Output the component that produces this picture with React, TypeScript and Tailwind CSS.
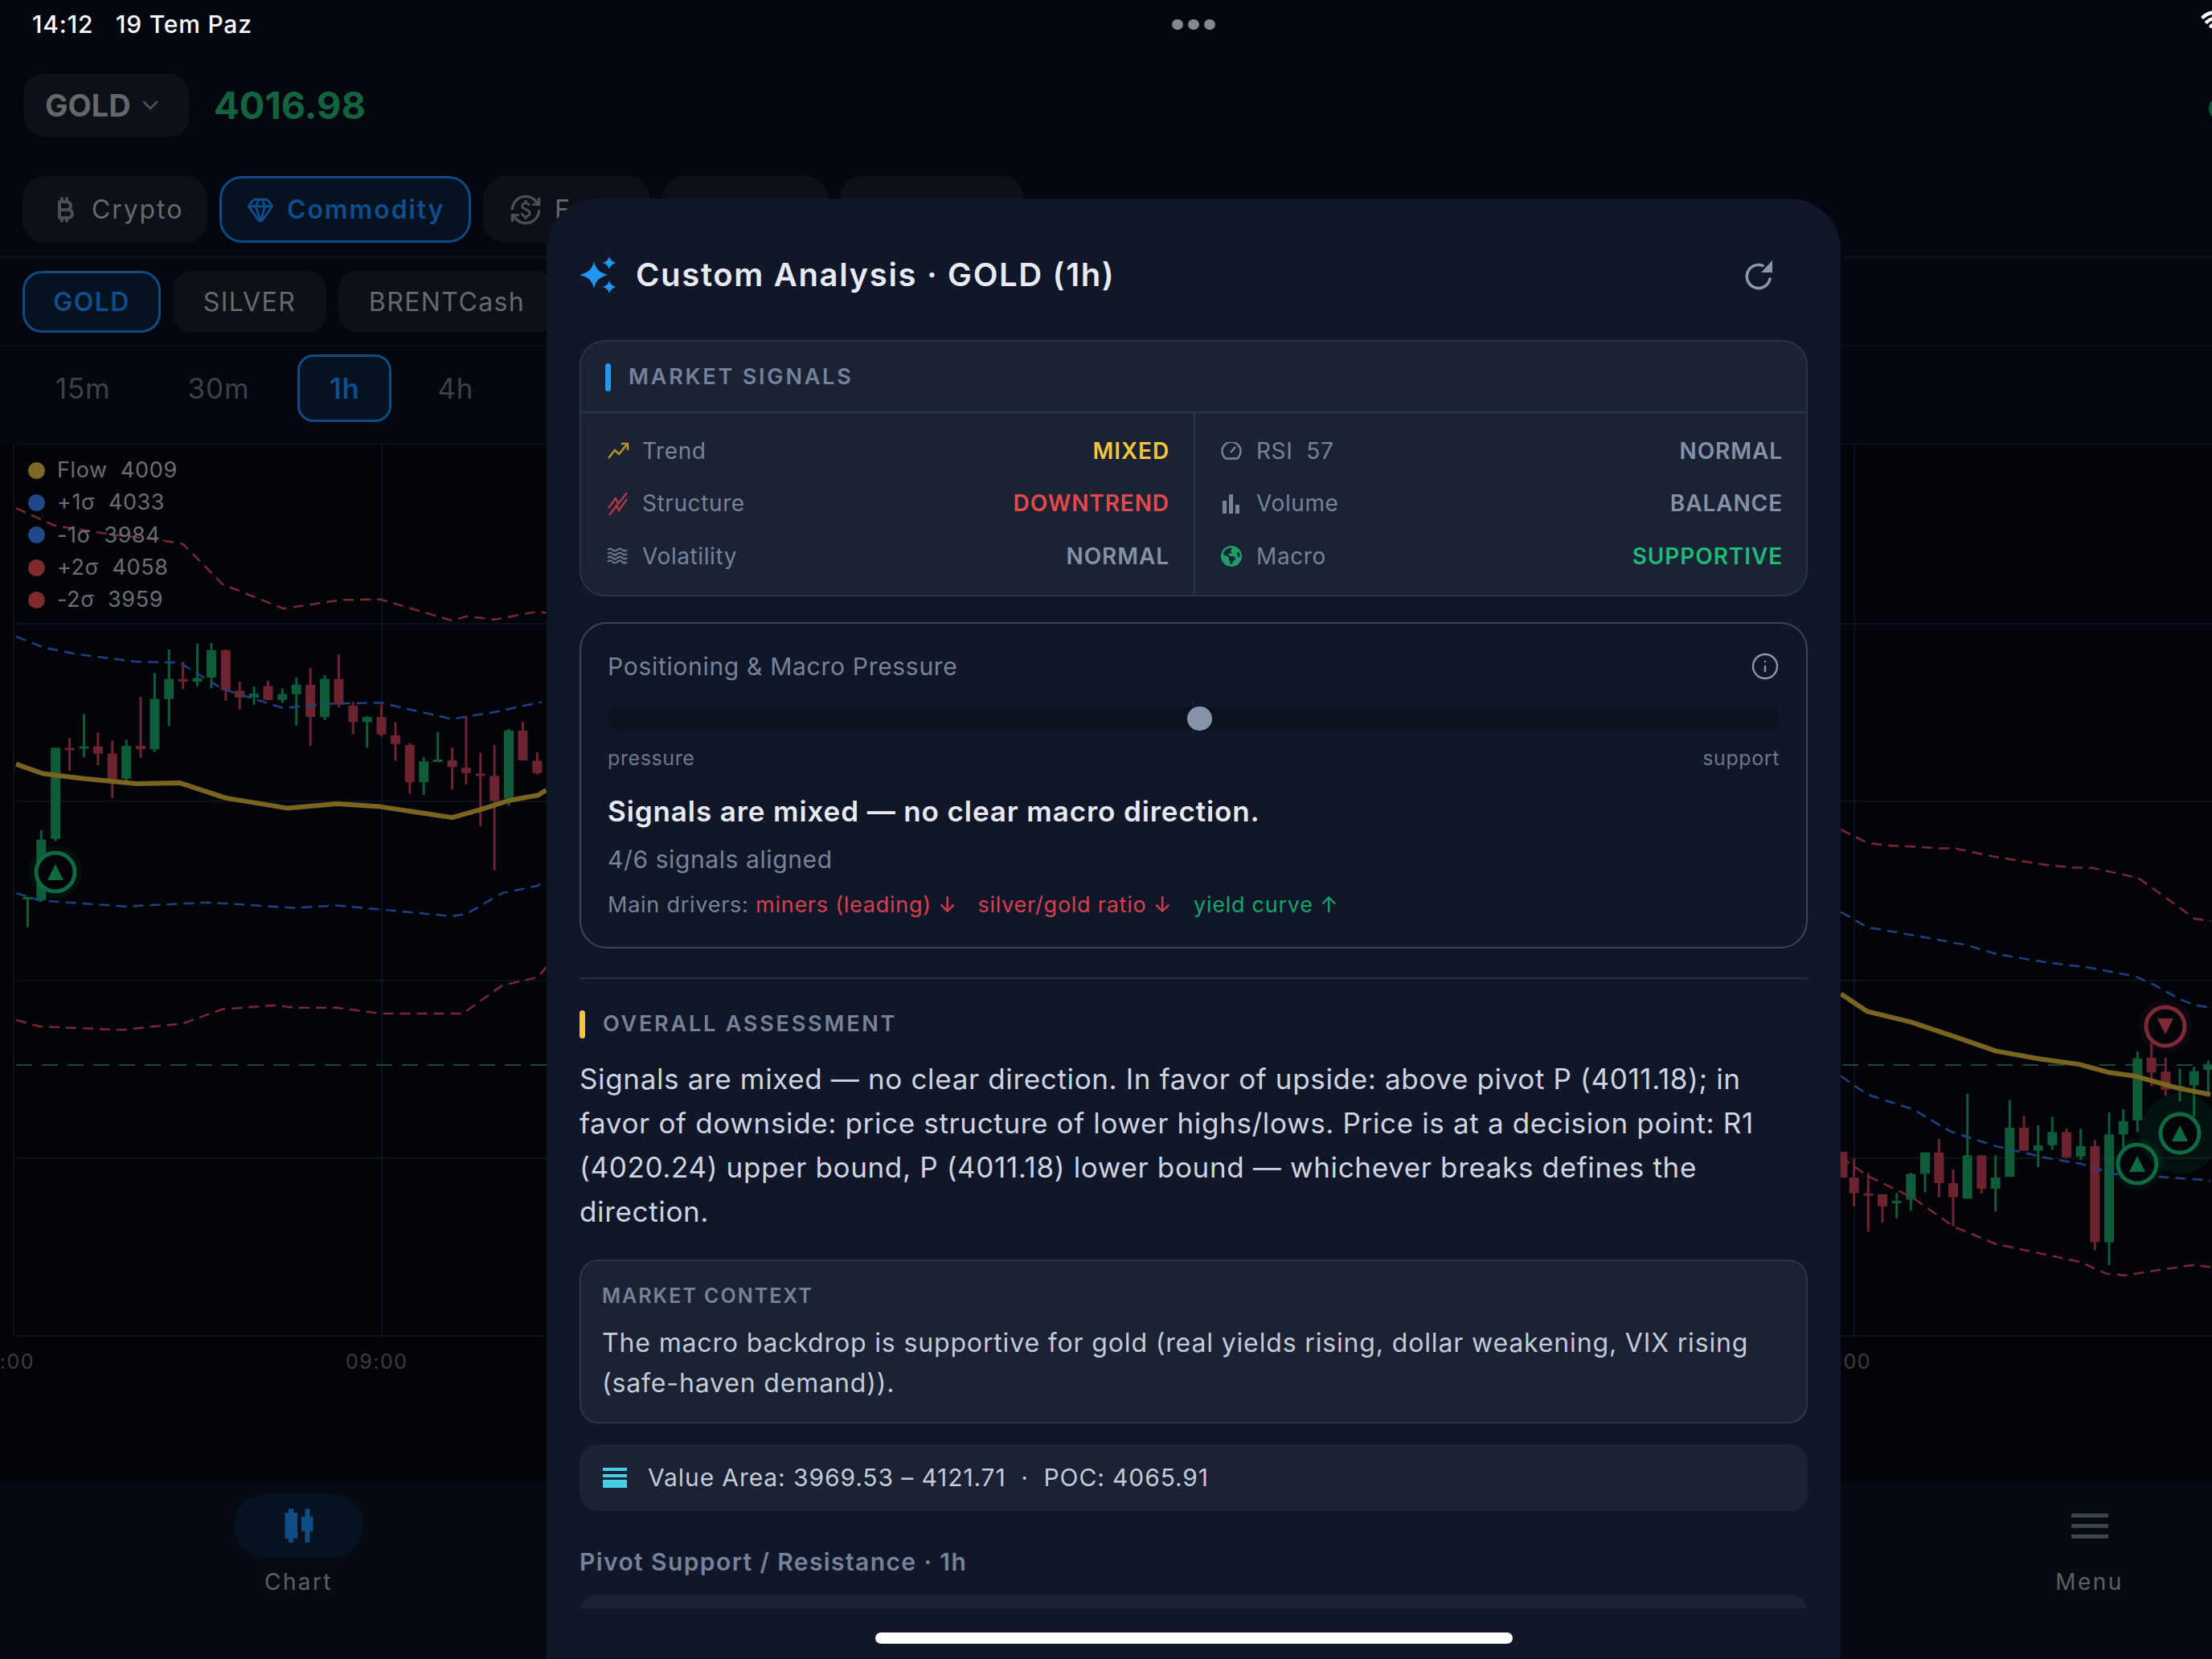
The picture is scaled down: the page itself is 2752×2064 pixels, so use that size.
import React from 'react';
import { ChevronDown, Gem, Info, Wifi } from 'lucide-react';
import { FaBitcoinSign, FaEarthAmericas } from 'react-icons/fa6';
import { MdCurrencyExchange } from 'react-icons/md';

type Pt = [number, number];
type Candle = [number, number, number, number, number, 'g' | 'r'];

// chart data is read off two crops of the reference, converted to page coords below
const leftX = (x: number) => x / 2.24;
const leftY = (y: number) => 550 + y / 2.8;
const lowY = (y: number) => 1100 + y / 1.627;
const rightX = (x: number) => 2280 + x / 3;
const rightY = (y: number) => 960 + y / 2.178;

const leftCandles: Candle[] = [
  [77, 1585, 1690, 1585, 1590, 'g'], [115, 1352, 1600, 1385, 1596, 'g'], [155, 1065, 1390, 1065, 1382, 'g'],
  [194, 1030, 1145, 1065, 1073, 'r'], [234, 948, 1098, 1060, 1068, 'g'], [273, 1012, 1125, 1060, 1085, 'r'],
  [313, 1040, 1240, 1085, 1175, 'r'], [352, 1037, 1180, 1058, 1172, 'g'], [392, 888, 1100, 1058, 1070, 'r'],
  [431, 805, 1080, 895, 1070, 'g'], [471, 722, 990, 825, 895, 'g'], [510, 765, 860, 825, 835, 'r'],
  [550, 702, 850, 822, 835, 'g'], [589, 700, 858, 725, 820, 'g'], [629, 722, 902, 725, 865, 'r'],
  [668, 835, 932, 866, 890, 'r'], [708, 852, 915, 876, 890, 'g'], [747, 832, 900, 850, 898, 'r'],
  [787, 858, 908, 878, 898, 'g'], [826, 820, 988, 845, 878, 'g'], [865, 787, 1058, 845, 958, 'r'],
  [905, 812, 968, 825, 958, 'g'], [944, 740, 925, 825, 915, 'r'], [984, 905, 1017, 918, 975, 'r'],
  [1023, 955, 1065, 958, 975, 'g'], [1063, 915, 1025, 958, 1018, 'r'], [1102, 975, 1110, 1022, 1052, 'r'],
  [1142, 1048, 1225, 1055, 1185, 'r'], [1181, 1098, 1230, 1112, 1185, 'g'], [1220, 1010, 1112, 1106, 1112, 'g'],
  [1260, 1065, 1210, 1108, 1132, 'r'], [1299, 955, 1192, 1135, 1153, 'r'], [1339, 1082, 1338, 1155, 1162, 'r'],
  [1378, 1055, 1492, 1163, 1250, 'r'], [1418, 1000, 1268, 1005, 1242, 'g'], [1457, 975, 1110, 1005, 1108, 'r'],
  [1497, 1080, 1158, 1110, 1153, 'r'],
];

const rightCandles: Candle[] = [
  [37, 1030, 1100, 1030, 1100, 'r'], [80, 1048, 1178, 1100, 1142, 'r'], [133, 1088, 1247, 1143, 1148, 'r'],
  [186, 1145, 1222, 1145, 1178, 'r'], [239, 1142, 1210, 1163, 1167, 'g'], [292, 1087, 1190, 1090, 1160, 'g'],
  [345, 1032, 1140, 1032, 1090, 'g'], [397, 995, 1153, 1032, 1115, 'r'], [450, 1078, 1232, 1115, 1153, 'r'],
  [503, 873, 1157, 1040, 1157, 'g'], [556, 1040, 1143, 1040, 1130, 'r'], [608, 1040, 1192, 1100, 1130, 'g'],
  [661, 890, 1098, 965, 1098, 'g'], [714, 933, 1027, 965, 1027, 'r'], [767, 958, 1072, 1013, 1027, 'g'],
  [820, 935, 1025, 977, 1012, 'g'], [873, 967, 1047, 977, 1045, 'r'], [926, 968, 1052, 1015, 1043, 'g'],
  [979, 998, 1297, 1015, 1275, 'r'], [1032, 923, 1337, 983, 1275, 'g'], [1085, 915, 1020, 947, 983, 'g'],
  [1138, 758, 977, 777, 945, 'g'], [1190, 735, 852, 775, 815, 'r'], [1243, 775, 878, 813, 862, 'r'],
  [1296, 805, 893, 852, 860, 'g'], [1349, 800, 935, 812, 850, 'g'], [1402, 783, 870, 796, 808, 'g'],
];

const RED = '#6e2430';
const GREEN = '#0e5c3a';
const DASH_RED = '#7a2a2e';
const DASH_BLUE = '#1d4382';
const GOLD = '#7a6420';

const leftLines: { pts: Pt[]; color: string; low?: boolean }[] = [
  { color: DASH_RED, pts: [[45, 230], [150, 290], [300, 320], [440, 340], [510, 355], [620, 495], [790, 580], [950, 550], [1060, 548], [1260, 622], [1300, 607], [1380, 618], [1500, 590], [1522, 595]] },
  { color: DASH_BLUE, pts: [[45, 677], [120, 715], [220, 740], [380, 765], [500, 768], [620, 860], [790, 927], [900, 912], [1060, 908], [1260, 965], [1380, 940], [1510, 905]] },
  { color: DASH_BLUE, low: true, pts: [[45, 18], [110, 33], [350, 45], [580, 37], [820, 48], [940, 43], [1260, 65], [1300, 60], [1400, 18], [1500, 3], [1522, -8]] },
  { color: DASH_RED, low: true, pts: [[45, 275], [110, 288], [340, 295], [510, 282], [620, 253], [770, 245], [820, 250], [940, 250], [1060, 262], [1290, 262], [1400, 205], [1500, 188], [1522, 168]] },
];
const leftGold: Pt[] = [[45, 1122], [120, 1155], [230, 1172], [380, 1190], [500, 1187], [630, 1240], [800, 1275], [940, 1260], [1060, 1270], [1260, 1308], [1340, 1280], [1420, 1248], [1500, 1230], [1522, 1212]];

const rightLines: { pts: Pt[]; color: string }[] = [
  { color: DASH_RED, pts: [[31, 157], [130, 193], [200, 200], [300, 203], [400, 208], [450, 207], [600, 230], [800, 253], [900, 260], [970, 261], [1140, 288], [1250, 345], [1350, 398], [1410, 405]] },
  { color: DASH_BLUE, pts: [[31, 380], [130, 422], [300, 443], [500, 470], [610, 494], [800, 517], [950, 530], [1130, 555], [1200, 578], [1300, 618], [1350, 632], [1410, 640]] },
  { color: DASH_BLUE, pts: [[31, 825], [130, 875], [300, 915], [440, 975], [610, 1015], [800, 1047], [930, 1063], [1050, 1090], [1200, 1097], [1410, 1108]] },
  { color: DASH_RED, pts: [[31, 1045], [130, 1095], [300, 1155], [450, 1232], [610, 1280], [920, 1328], [1020, 1360], [1090, 1365], [1340, 1337], [1410, 1342]] },
];
const rightGold: Pt[] = [[31, 602], [130, 650], [290, 678], [450, 717], [610, 757], [770, 778], [920, 793], [1030, 815], [1130, 825], [1290, 858], [1410, 875]];

const toPoints = (pts: Pt[], fx: (n: number) => number, fy: (n: number) => number) =>
  pts.map(([x, y]) => `${fx(x).toFixed(1)},${fy(y).toFixed(1)}`).join(' ');

const Candles = ({ data, fx, fy }: { data: Candle[]; fx: (n: number) => number; fy: (n: number) => number }) => (
  <>
    {data.map(([x, wt, wb, bt, bb, c]) => (
      <g key={x} fill={c === 'g' ? GREEN : RED}>
        <rect x={fx(x) - 1.5} y={fy(wt)} width={3} height={fy(wb) - fy(wt)} />
        <rect x={fx(x) - 6} y={fy(bt)} width={12} height={Math.max(fy(bb) - fy(bt), 3)} />
      </g>
    ))}
  </>
);

const Marker = ({ x, y, down, halo = 33, glow = 0.1 }: { x: number; y: number; down?: boolean; halo?: number; glow?: number }) => {
  const color = down ? '#7c2a36' : '#0f6a42';
  return (
    <g>
      <circle cx={x} cy={y} r={halo} fill={color} opacity={glow} />
      <circle cx={x} cy={y} r={24} fill="#03050b" stroke={color} strokeWidth={5} />
      <polygon fill={color} points={down ? `${x - 10},${y - 10} ${x + 10},${y - 10} ${x},${y + 10}` : `${x - 10},${y + 10} ${x + 10},${y + 10} ${x},${y - 10}`} />
    </g>
  );
};

const ChartCanvas = () => (
  <svg className="absolute inset-0" width={2752} height={1292} viewBox="0 552 2752 1292" fill="none">
    <g stroke="#0d131b" strokeWidth={2}>
      {[552, 776, 997, 1220, 1441, 1662].map((y) => <line key={y} x1={20} x2={2752} y1={y} y2={y} />)}
      {[17, 475, 2307].map((x) => <line key={x} x1={x} x2={x} y1={552} y2={1662} />)}
    </g>
    <line x1={20} x2={2752} y1={1325} y2={1325} stroke="#0f4a35" strokeWidth={2} strokeDasharray="20 12" />
    <Candles data={leftCandles} fx={leftX} fy={leftY} />
    <Candles data={rightCandles} fx={rightX} fy={rightY} />
    {leftLines.map((l, i) => (
      <polyline key={i} points={toPoints(l.pts, leftX, l.low ? lowY : leftY)} stroke={l.color} strokeWidth={2.5} strokeDasharray="13 8" />
    ))}
    {rightLines.map((l, i) => (
      <polyline key={i} points={toPoints(l.pts, rightX, rightY)} stroke={l.color} strokeWidth={2.5} strokeDasharray="13 8" />
    ))}
    <polyline points={toPoints(leftGold, leftX, leftY)} stroke={GOLD} strokeWidth={6} strokeLinejoin="round" />
    <polyline points={toPoints(rightGold, rightX, rightY)} stroke={GOLD} strokeWidth={6} strokeLinejoin="round" />
    <Marker x={69} y={1085} />
    <Marker x={2694} y={1277} down />
    <Marker x={2659} y={1448} />
    <Marker x={2712} y={1410} halo={50} glow={0.14} />
    <g fill="#3a3e44" fontSize={25} letterSpacing={1.5}>
      <text x={43} y={1703} textAnchor="end">06:00</text>
      <text x={430} y={1703}>09:00</text>
      <text x={2328} y={1703} textAnchor="end">12:00</text>
    </g>
  </svg>
);

const legend = [
  { dot: 'bg-[#7c6a24]', label: 'Flow', value: '4009' },
  { dot: 'bg-[#1e4a8c]', label: '+1σ', value: '4033' },
  { dot: 'bg-[#1e4a8c]', label: '-1σ', value: '3984' },
  { dot: 'bg-[#7f2b2e]', label: '+2σ', value: '4058' },
  { dot: 'bg-[#7f2b2e]', label: '-2σ', value: '3959' },
];

const CategoryTab = ({ w, active, icon, label }: { w: string; active?: boolean; icon?: React.ReactNode; label?: string }) => (
  <div
    className={`${w} h-[83px] rounded-[28px] flex items-center gap-[16px] text-[32px] tracking-[1.9px] ${
      active ? 'pl-[31px] border-[3px] border-[#0f4a85] bg-[#06121f] text-[#0f4d8c] font-semibold' : 'pl-[38px] bg-[#0c1017] text-[#66696e]'
    }`}
  >
    {icon}
    {label}
  </div>
);

const SymbolTab = ({ w, active, label }: { w: string; active?: boolean; label: string }) => (
  <div
    className={`${w} h-[77px] rounded-[24px] flex items-center justify-center text-[32px] tracking-[1.4px] ${
      active ? 'border-[3px] border-[#0f4a85] bg-[#06121f] text-[#0f4d8c] font-semibold' : 'bg-[#0c1017] text-[#66696e]'
    }`}
  >
    {label}
  </div>
);

const TrendIcon = () => (
  <svg width={28} height={28} viewBox="0 0 28 28" fill="none" stroke="#b8942e" strokeWidth={2.5}>
    <path d="M2 23 L10 13 L15 18 L25 6" />
    <path d="M18 5 H26 V13" />
  </svg>
);

const StructureIcon = () => (
  <svg width={28} height={32} viewBox="0 0 28 32" fill="none" stroke="#b53a48" strokeWidth={2.4}>
    <path d="M2 22 L11 10 L14 17 L25 3" />
    <path d="M3 31 L12 19 L15 25 L25 11" />
  </svg>
);

const VolatilityIcon = () => (
  <svg width={26} height={22} viewBox="0 0 26 22" fill="none" stroke="#6b788c" strokeWidth={2.2}>
    {[3, 8, 13, 18].map((y) => (
      <path key={y} d={`M1 ${y} q3 -3 6 0 t6 0 t6 0 t6 0`} />
    ))}
  </svg>
);

const GaugeIcon = () => (
  <svg width={26} height={22} viewBox="0 0 26 22" fill="none" stroke="#76849a" strokeWidth={2.4}>
    <path d="M6 20.5 A11.5 11.5 0 1 1 20 20.5 Z" strokeLinejoin="round" />
    <path d="M12 13 L18 6" />
  </svg>
);

const VolumeIcon = () => (
  <svg width={24} height={26} viewBox="0 0 24 26" fill="#76849a">
    <rect x={2} y={10} width={5} height={16} />
    <rect x={10} y={2} width={5} height={24} />
    <rect x={18} y={15} width={5} height={11} />
  </svg>
);

const Signal = ({ icon, label, value, color }: { icon: React.ReactNode; label: string; value: string; color: string }) => (
  <div className="h-[65.5px] flex items-center">
    <div className="w-[44px] flex items-center">{icon}</div>
    <div className="text-[28px] tracking-[0.6px] text-[#76849a] whitespace-pre">{label}</div>
    <div className={`ml-auto text-[28px] font-semibold tracking-[0.9px] ${color}`}>{value}</div>
  </div>
);

const SectionTitle = ({ bar, label }: { bar: string; label: string }) => (
  <div className="flex items-center gap-[22px]">
    <div className={`w-[7px] h-[35px] rounded-full ${bar}`} />
    <div className="text-[27px] font-semibold tracking-[2.8px] text-[#75839a]">{label}</div>
  </div>
);

const Sparkles = () => (
  <svg width={46} height={46} viewBox="0 0 46 46" fill="#2196f3">
    <path d="M18 6 C20 15 24 20 35 23 C24 26 20 31 18 40 C16 31 12 26 0 23 C12 20 16 15 18 6 Z" />
    <path d="M37 0 C38 4 40 6 45 8 C40 10 38 12 37 16 C36 12 34 10 29 8 C34 6 36 4 37 0 Z" />
    <path d="M37 30 C38 34 40 36 45 38 C40 40 38 42 37 46 C36 42 34 40 29 38 C34 36 36 34 37 30 Z" />
  </svg>
);

const Reload = () => (
  <svg width={38} height={38} viewBox="0 0 38 38" fill="none">
    <path d="M32 24 A14.5 14.5 0 1 1 23 7.5" stroke="#8a97aa" strokeWidth={3.6} strokeLinecap="round" />
    <polygon points="35,1 35,16 21,16" fill="#8a97aa" />
  </svg>
);

const ValueAreaIcon = () => (
  <svg width={30} height={25} viewBox="0 0 30 25" fill="#45cfe6">
    <rect width={30} height={4} />
    <rect y={8} width={30} height={4} />
    <rect y={15} width={30} height={10} />
  </svg>
);

const CandlesIcon = () => (
  <svg width={36} height={42} viewBox="0 0 36 42" fill="#0f4d86">
    <rect x={0.5} y={5} width={15.5} height={32} />
    <rect x={5} y={0} width={6} height={42} />
    <rect x={21} y={10} width={14.5} height={18} />
    <rect x={25.5} y={0} width={6} height={42} />
  </svg>
);

const AnalysisSheet = () => (
  <div className="absolute left-[680px] top-[247px] w-[1610px] h-[1817px] rounded-t-[64px] bg-[#111729]">
    <div className="h-[1754px] overflow-hidden px-[41px]">
      <div className="h-[176px] pt-[14px] flex items-center">
        <Sparkles />
        <div className="ml-[24px] text-[40px] font-semibold tracking-[1.65px] text-[#e6ebf3]">Custom Analysis · GOLD (1h)</div>
        <div className="ml-auto mr-[41px] flex"><Reload /></div>
      </div>

      <div className="h-[319px] rounded-[32px] border-2 border-[#28344a] bg-[#1a2233]">
        <div className="h-[89px] pt-[2px] px-[30px] flex items-center border-b-2 border-[#28344a]">
          <SectionTitle bar="bg-[#2196f3]" label="MARKET SIGNALS" />
        </div>
        <div className="grid grid-cols-[764px_1fr]">
          <div className="pl-[32px] pr-[30px] pt-[14px] pb-[14px] border-r-2 border-[#28344a]">
            <Signal icon={<TrendIcon />} label="Trend" value="MIXED" color="text-[#f5c53f]" />
            <Signal icon={<StructureIcon />} label="Structure" value="DOWNTREND" color="text-[#e5484d]" />
            <Signal icon={<VolatilityIcon />} label="Volatility" value="NORMAL" color="text-[#8492a8]" />
          </div>
          <div className="pl-[32px] pr-[29px] pt-[14px] pb-[14px]">
            <Signal icon={<GaugeIcon />} label="RSI  57" value="NORMAL" color="text-[#8492a8]" />
            <Signal icon={<VolumeIcon />} label="Volume" value="BALANCE" color="text-[#8492a8]" />
            <Signal icon={<FaEarthAmericas size={26} color="#1f9e6a" />} label="Macro" value="SUPPORTIVE" color="text-[#1fb978]" />
          </div>
        </div>
      </div>

      <div className="mt-[32px] h-[406px] rounded-[34px] border-2 border-[#3b4658] px-[33px] pt-[30px]">
        <div className="h-[46px] flex items-center justify-between">
          <div className="text-[30px] tracking-[0.7px] text-[#76849a]">Positioning &amp; Macro Pressure</div>
          <Info size={36} color="#8a97aa" strokeWidth={1.6} />
        </div>
        <div className="relative mt-[27px] h-[30px] rounded-full bg-[#0d131d]">
          <div className="absolute left-[728px] top-[-8px] w-[1px] h-[46px] bg-[#1e2735]" />
          <div className="absolute left-[721px] top-0 w-[31px] h-[30px] rounded-full bg-[#8494ad]" />
        </div>
        <div className="mt-[20px] h-[30px] flex items-center justify-between text-[25px] tracking-[0.6px] text-[#6b788c]">
          <div>pressure</div>
          <div>support</div>
        </div>
        <div className="mt-[27px] h-[46px] flex items-center text-[35px] font-semibold tracking-[0.9px] text-[#e6ebf3]">
          Signals are mixed — no clear macro direction.
        </div>
        <div className="mt-[17px] h-[40px] flex items-center text-[30px] tracking-[0.6px] text-[#76849a]">4/6 signals aligned</div>
        <div className="mt-[19px] h-[36px] flex items-center text-[27px] tracking-[0.75px] text-[#76849a] whitespace-pre">
          <span>Main drivers: </span>
          <span className="text-[#d9404f]">miners (leading) ↓</span>
          <span className="ml-[26px] text-[#d9404f]">silver/gold ratio ↓</span>
          <span className="ml-[27px] text-[#16a56a]">yield curve ↑</span>
        </div>
      </div>

      <div className="mt-[36px] h-[2px] bg-[#24303f]" />

      <div className="mt-[38px] h-[36px] flex items-center">
        <SectionTitle bar="bg-[#f5c53f]" label="OVERALL ASSESSMENT" />
      </div>

      <div className="mt-[23px] text-[35px] leading-[55px] tracking-[0.65px] text-[#cdd5e0]">
        Signals are mixed — no clear direction. In favor of upside: above pivot P (4011.18); in favor of downside: price
        structure of lower highs/lows. Price is at a decision point: R1 (4020.24) upper bound, P (4011.18) lower bound —
        whichever breaks defines the direction.
      </div>

      <div className="mt-[32px] h-[204px] rounded-[24px] border-2 border-[#2c3648] bg-[#1a2233] px-[26px] pt-[29px]">
        <div className="h-[30px] flex items-center text-[25px] font-semibold tracking-[2px] text-[#75839a]">MARKET CONTEXT</div>
        <div className="mt-[18px] text-[32px] leading-[49.5px] tracking-[0.85px] text-[#c3cbd8]">
          The macro backdrop is supportive for gold (real yields rising, dollar weakening, VIX rising (safe-haven demand)).
        </div>
      </div>

      <div className="mt-[26px] h-[83px] rounded-[22px] bg-[#1a2233] px-[29px] flex items-center gap-[26px]">
        <ValueAreaIcon />
        <div className="text-[30px] tracking-[0.9px] text-[#c3cbd8] whitespace-pre">Value Area: 3969.53 – 4121.71  ·  POC: 4065.91</div>
      </div>

      <div className="mt-[43px] h-[40px] flex items-center text-[30px] font-semibold tracking-[1.4px] text-[#75839a]">
        Pivot Support / Resistance · 1h
      </div>
      <div className="mt-[21px] h-[100px] rounded-t-[22px] bg-[#1a2233]" />
    </div>
    <div className="mt-[30px] mx-auto w-[793px] h-[14px] rounded-full bg-white" />
  </div>
);

export default function App() {
  return (
    <div className="relative w-[2752px] h-[2064px] overflow-hidden bg-[#04070f] [font-family:Inter,sans-serif] flex flex-col">
      <div className="h-[60px] shrink-0 relative flex items-center pl-[40px] text-[30px] tracking-[0.8px] font-medium text-white whitespace-pre">
        <span className="w-[104px]">14:12</span>
        <span>19 Tem Paz</span>
        <div className="absolute left-[1458px] top-[24px] flex gap-[6px]">
          <div className="w-[14px] h-[13px] rounded-full bg-[#85888e]" />
          <div className="w-[14px] h-[13px] rounded-full bg-[#85888e]" />
          <div className="w-[14px] h-[13px] rounded-full bg-[#85888e]" />
        </div>
        <Wifi className="absolute left-[2738px] top-[8px]" size={36} color="#ffffff" strokeWidth={3} />
      </div>

      <div className="mt-[32px] h-[78px] shrink-0 relative flex items-center pl-[30px]">
        <div className="w-[205px] h-full rounded-[24px] bg-[#0c1017] flex items-center pl-[26px] gap-[8px] text-[38px] font-bold text-[#65676b]">
          GOLD
          <ChevronDown size={32} color="#4a4d52" strokeWidth={2.2} />
        </div>
        <div className="ml-[31px] text-[47px] font-bold text-[#14633f]">4016.98</div>
        <div className="absolute left-[2748px] top-[28px] w-[30px] h-[30px] rounded-full bg-[#0f5a3a]" />
      </div>

      <div className="mt-[49px] h-[102px] shrink-0 pl-[28px] flex gap-[15px] border-b-2 border-[#0a0f16]">
        <CategoryTab w="w-[230px]" icon={<FaBitcoinSign size={32} color="#4c4f54" />} label="Crypto" />
        <CategoryTab w="w-[313px]" active icon={<Gem size={34} color="#0f4d8c" strokeWidth={2} />} label="Commodity" />
        <CategoryTab w="w-[208px]" icon={<MdCurrencyExchange className="-ml-[5px]" size={40} color="#4c4f54" />} label="Forex" />
        <CategoryTab w="w-[206px]" />
        <CategoryTab w="w-[229px]" />
      </div>

      <div className="h-[110px] shrink-0 pt-[16px] pl-[28px] flex gap-[15px] border-b-2 border-[#0a0f16]">
        <SymbolTab w="w-[172px]" active label="GOLD" />
        <SymbolTab w="w-[191px]" label="SILVER" />
        <SymbolTab w="w-[270px]" label="BRENTCash" />
      </div>

      <div className="h-[121px] shrink-0 pt-[10px] pl-[33px] flex gap-[24px] text-[35px] tracking-[0.8px] text-[#3d4147]">
        <div className="h-[84px] px-[36px] flex items-center">15m</div>
        <div className="h-[84px] px-[36px] flex items-center">30m</div>
        <div className="w-[117px] h-[84px] rounded-[20px] border-[3px] border-[#0f4a85] bg-[#06121f] flex items-center justify-center font-semibold text-[#0f4d8c]">1h</div>
        <div className="-ml-[3px] h-[84px] px-[36px] flex items-center">4h</div>
      </div>

      <div className="relative h-[1292px] shrink-0 bg-[#020409]">
        <ChartCanvas />
        <div className="absolute left-[35px] top-[13px] flex flex-col">
          {legend.map((l) => (
            <div key={l.label} className="h-[40.3px] flex items-center gap-[15px] text-[27px] tracking-[0.6px] text-[#6b6e72] whitespace-pre">
              <div className={`w-[21px] h-[21px] rounded-full ${l.dot}`} />
              <span>{l.label}  {l.value}</span>
            </div>
          ))}
        </div>
      </div>

      <div className="h-[220px] shrink-0 bg-[#060a12] flex pl-[291px] pr-[72px] pt-[14px] text-[28px] tracking-[2.4px] text-[#5f5f63]">
        <div className="w-[161px] flex flex-col items-center">
          <div className="w-full h-[80px] rounded-full bg-[#06121f] flex items-center justify-center">
            <CandlesIcon />
          </div>
          <div className="mt-[13px] leading-[34px]">Chart</div>
        </div>
        <div className="ml-auto w-[161px] flex flex-col items-center">
          <div className="h-[80px] flex flex-col justify-center gap-[8px] w-[46px]">
            <div className="h-[5px] bg-[#3c444e]" />
            <div className="h-[5px] bg-[#3c444e]" />
            <div className="h-[5px] bg-[#3c444e]" />
          </div>
          <div className="mt-[13px] leading-[34px]">Menu</div>
        </div>
      </div>

      <AnalysisSheet />
    </div>
  );
}
